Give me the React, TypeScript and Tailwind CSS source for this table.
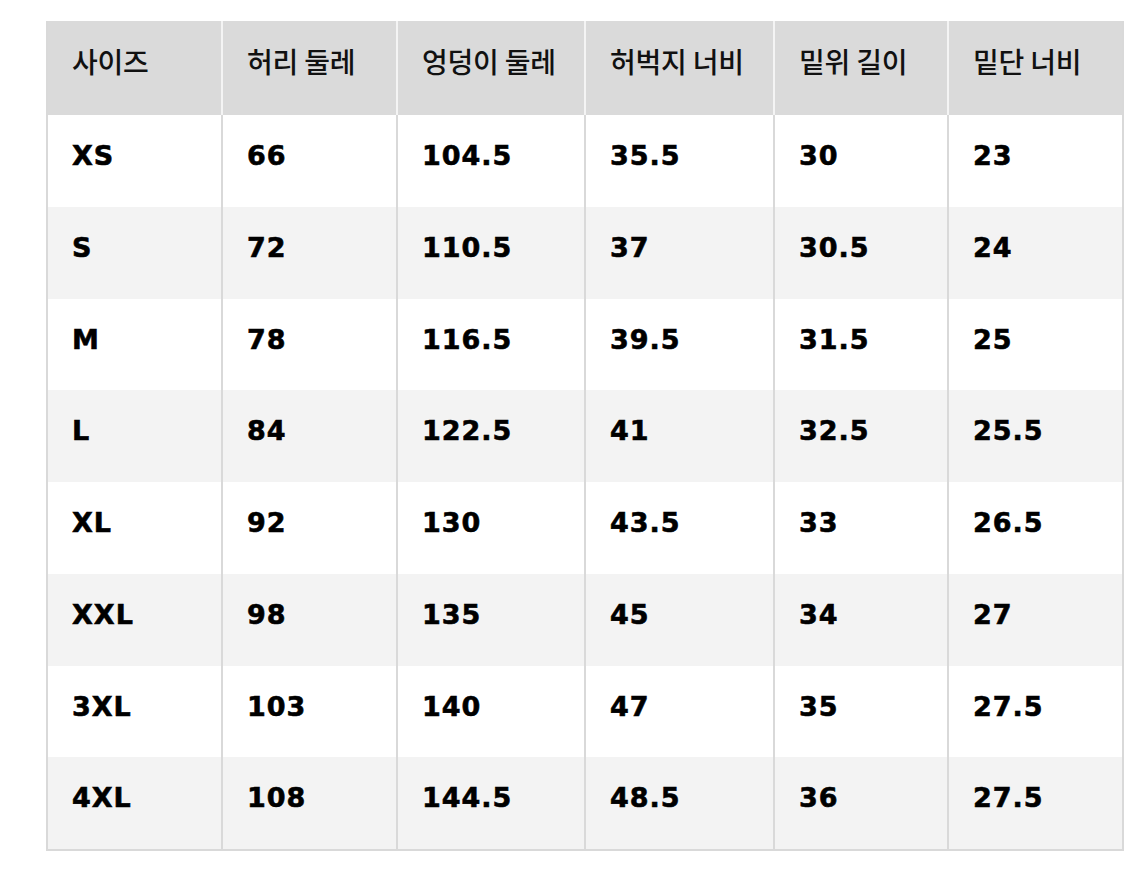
import React from "react";

const headers = ["사이즈", "허리 둘레", "엉덩이 둘레", "허벅지 너비", "밑위 길이", "밑단 너비"];
const rows: string[][] = [
  ["XS", "66", "104.5", "35.5", "30", "23"],
  ["S", "72", "110.5", "37", "30.5", "24"],
  ["M", "78", "116.5", "39.5", "31.5", "25"],
  ["L", "84", "122.5", "41", "32.5", "25.5"],
  ["XL", "92", "130", "43.5", "33", "26.5"],
  ["XXL", "98", "135", "45", "34", "27"],
  ["3XL", "103", "140", "47", "35", "27.5"],
  ["4XL", "108", "144.5", "48.5", "36", "27.5"],
];

const gridCols = "grid grid-cols-[173px_175px_188px_189px_174px_175px]";

export default function App() {
  return (
    <div className="w-[1125px] h-[896px] bg-white overflow-hidden">
      <div className="ml-[46px] mt-[21px] w-[1078px] border-x-2 border-b-2 border-[#d9d9d9]">
        <div className={`${gridCols} h-[94px] bg-[#dadada]`}>
          {headers.map((h, i) => (
            <div
              key={i}
              className={`flex items-center pl-6 pb-[14px] text-[28px] font-medium text-[#111] tracking-[-0.2px] ${i > 0 ? "border-l-2 border-[#f4f4f4]" : ""}`}
              style={{ fontFamily: '"Noto Sans CJK KR", "Noto Sans", sans-serif' }}
            >
              {h}
            </div>
          ))}
        </div>
        {rows.map((r, ri) => (
          <div
            key={ri}
            className={`${gridCols} h-[91.75px] ${ri % 2 === 1 ? "bg-[#f3f3f3]" : "bg-white"}`}
          >
            {r.map((c, ci) => (
              <div
                key={ci}
                className={`flex items-center pl-6 pb-[9px] text-[27px] font-bold tracking-[1px] text-black [-webkit-text-stroke:0.6px_black] ${ci > 0 ? "border-l-2 border-[#d9d9d9]" : ""}`}
                style={{ fontFamily: '"DejaVu Sans", sans-serif' }}
              >
                {c}
              </div>
            ))}
          </div>
        ))}
      </div>
    </div>
  );
}
